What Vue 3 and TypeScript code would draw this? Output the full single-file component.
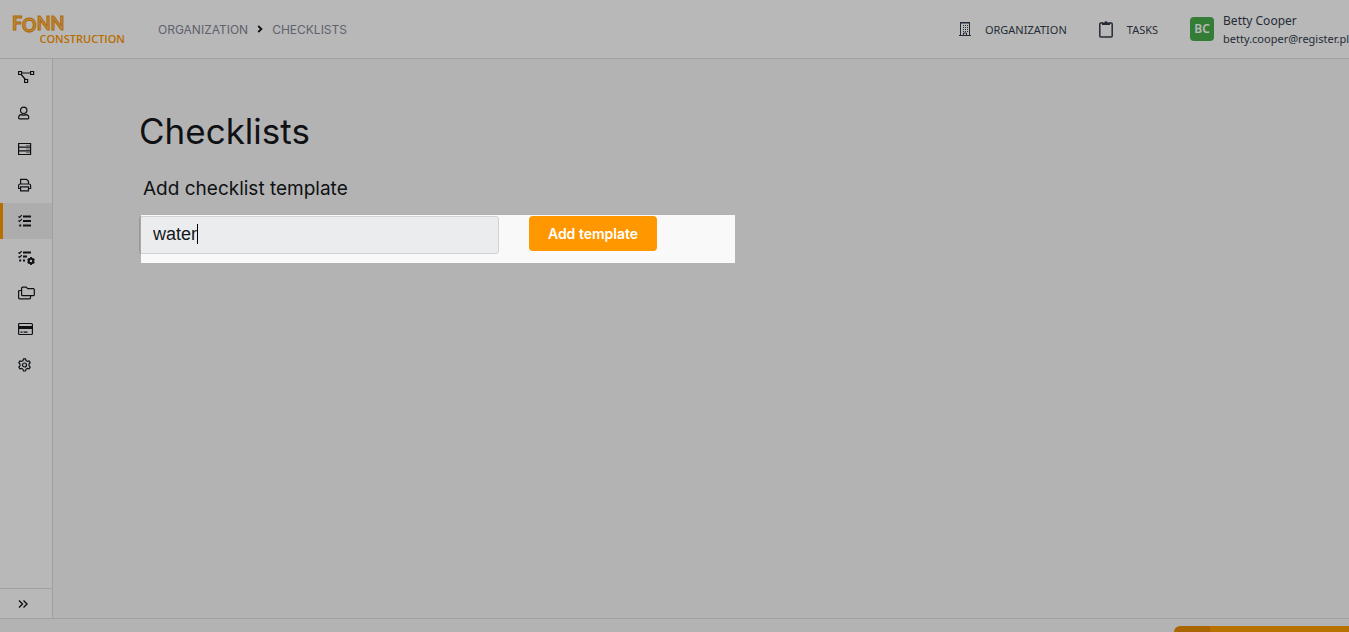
<script setup lang="ts">
import { ref } from 'vue'

interface NavItem {
  name: string
  label: string
}

const navItems: NavItem[] = [
  { name: 'workflow', label: 'Workflow' },
  { name: 'user', label: 'Users' },
  { name: 'server', label: 'Storage' },
  { name: 'printer', label: 'Print' },
  { name: 'checklist', label: 'Checklists' },
  { name: 'checklist-settings', label: 'Checklist settings' },
  { name: 'folders', label: 'Folders' },
  { name: 'card', label: 'Billing' },
  { name: 'settings', label: 'Settings' },
]

const active = ref('checklist')
const templateName = ref('water')
</script>

<template>
  <div class="page">
    <header class="header">
      <a class="logo" href="#" aria-label="Fonn Construction">
        <svg class="logo-mark" viewBox="0 0 54 22" aria-hidden="true">
          <text class="logo-letters" x="0" y="17">F<tspan dy="2">O</tspan><tspan dy="-2">NN</tspan></text>
        </svg>
        <span class="logo-sub">CONSTRUCTION</span>
      </a>
      <nav class="crumbs" aria-label="Breadcrumb">
        <a href="#">ORGANIZATION</a>
        <svg viewBox="0 0 6 8" aria-hidden="true"><path d="M1.2 1 4.4 4 1.2 7" /></svg>
        <a href="#">CHECKLISTS</a>
      </nav>
      <div class="actions">
        <a class="action" href="#">
          <svg class="building" viewBox="0 0 12 14" aria-hidden="true">
            <path d="M1.500 13V1h9v12M0 13.500h12M1 .5h10" />
            <path class="windows" d="M4.500 3v7M6.500 3v7M8.500 3v7" />
            <path d="M4.500 13v-2h3v2" />
          </svg>
          <span>ORGANIZATION</span>
        </a>
        <a class="action tasks" href="#">
          <svg class="clipboard" viewBox="0 0 14 18" aria-hidden="true">
            <path d="M4 3H1.800a1 1 0 0 0-1 1v12a1 1 0 0 0 1 1h10.400a1 1 0 0 0 1-1V4a1 1 0 0 0-1-1H10" />
            <path class="solid" d="M3 5V2.500h2.300a1.800 1.800 0 0 1 3.400 0H11V5Z" />
          </svg>
          <span>TASKS</span>
        </a>
        <a class="account" href="#">
          <span class="avatar">BC</span>
          <span class="who">
            <span class="name">Betty Cooper</span>
            <span class="mail">betty.cooper@register.pl</span>
          </span>
        </a>
      </div>
    </header>

    <div class="body">
      <aside class="sidebar">
        <nav class="nav" aria-label="Main">
          <a
            v-for="item in navItems"
            :key="item.name"
            href="#"
            class="nav-item"
            :class="{ active: item.name === active }"
            :aria-label="item.label"
            @click.prevent="active = item.name"
          >
            <svg viewBox="0 0 18 16" aria-hidden="true">
              <g v-if="item.name === 'workflow'">
                <path d="M.6 2.500h3v3h-3zM12.600 2.500h3v3h-3zM6.600 10.500h3v3h-3zM3.600 4h9M3.200 5.500 7.400 10.500" />
              </g>
              <g v-else-if="item.name === 'user'">
                <circle cx="5.700" cy="5.300" r="3.200" />
                <path d="M.6 12.800c0-2 1.300-3.200 2.900-3.200 1.200.6 3.200.6 4.400 0 1.600 0 2.900 1.200 2.900 3.200 0 .7-.3 1-.9 1H1.500c-.6 0-.9-.3-.9-1Z" />
              </g>
              <g v-else-if="item.name === 'server'">
                <path d="M.6 2.500h12v11H.6zM.6 6.200h12M.6 9.800h12" />
                <path class="thin" d="M8.500 4.400h1M10.500 4.400h1M8.500 8h1M10.500 8h1M8.500 11.700h1M10.500 11.700h1" />
              </g>
              <g v-else-if="item.name === 'printer'">
                <path d="M2.600 7V2.300h5.900l2 2V7M2.600 11.500h-2V8.600C.6 7.700 1.200 7 2.100 7h8.900c.9 0 1.600.7 1.600 1.600v2.900h-2.100M2.600 9.800h7.900v4H2.600z" />
              </g>
              <g v-else-if="item.name === 'checklist'">
                <path d="M.5 3.500 1.500 4.500 3.800 2.200M.5 7.500 1.500 8.500 3.800 6.200" />
                <path class="bold" d="M5 3.500h8M5 8h8M5 12.500h8M1.200 12.500h2" />
              </g>
              <g v-else-if="item.name === 'checklist-settings'">
                <path d="M.5 3.500 1.500 4.500 3.800 2.200M.5 7.500 1.500 8.500 3.800 6.200" />
                <path class="bold" d="M5 3.500h8M5 7.500h4M1.200 11.500h2M5 11.500h2" />
                <circle class="bold" cx="13" cy="12" r="2.200" />
                <path class="teeth" d="M13 8.100v1.500M13 14.400v1.500M9.600 10.100l1.400.8M15 13.100l1.400.8M9.600 13.900l1.400-.8M15 10.900l1.400-.8" />
              </g>
              <g v-else-if="item.name === 'folders'">
                <path d="M4.600 2.200h3.600l1.500 1.500h5.600c.6 0 1 .4 1 1v5c0 .6-.4 1-1 1H4.600c-.6 0-1-.4-1-1V3.200c0-.6.4-1 1-1Z" />
                <path d="M3.500 5.500H1.600c-.6 0-1 .4-1 1v6.300c0 .6.400 1 1 1h9.900c.6 0 1-.4 1-1v-2" />
              </g>
              <g v-else-if="item.name === 'card'">
                <rect x=".6" y="2.500" width="13.800" height="11" rx="1" />
                <path class="stripe" d="M.6 6.500h13.800" />
                <path d="M2.500 11.200h2M5.500 11.200h4" />
              </g>
              <g v-else>
                <path d="M5.500 1.900h2l.5 1.700 1.400.8 1.700-.5 1.100 1.800-1.200 1.300v1.800l1.200 1.300-1.100 1.800-1.700-.4-1.400.8-.5 1.700h-2L5 12.300l-1.400-.8-1.700.4-1.100-1.800L2 8.800V7L.8 5.700l1.100-1.800 1.700.5L5 3.600Z" />
                <circle cx="6.500" cy="8" r="2" />
              </g>
            </svg>
          </a>
        </nav>
        <button class="expand" type="button" aria-label="Expand menu">
          <svg viewBox="0 0 10 8" aria-hidden="true"><path d="M1 .5 4.500 4 1 7.500M5.500.5 9 4 5.500 7.500" /></svg>
        </button>
      </aside>

      <main class="content">
        <h1>Checklists</h1>
        <form @submit.prevent>
          <label for="template-name">Add checklist template</label>
          <div class="form-row">
            <div class="field">
              <input id="template-name" v-model="templateName" type="text" autocomplete="off" />
              <span class="caret" aria-hidden="true"><span>{{ templateName }}</span></span>
            </div>
            <button class="add" type="submit">Add template</button>
            <div class="spotlight"></div>
          </div>
        </form>
      </main>
    </div>

    <footer class="footer">
      <div class="chat"></div>
    </footer>
  </div>
</template>

<style>
body {
  margin: 0;
}
</style>

<style scoped>
* {
  box-sizing: border-box;
}
.page {
  display: flex;
  flex-direction: column;
  height: 100vh;
  overflow: hidden;
  background: #f9f9f9;
  color: #15181c;
  font-family: Inter, "Open Sans", sans-serif;
}
a {
  color: inherit;
  text-decoration: none;
}
svg {
  display: block;
  fill: none;
  stroke: currentColor;
}
.header {
  display: flex;
  flex: none;
  align-items: center;
  height: 59px;
  padding-left: 12px;
  background: #fff;
  border-bottom: 1px solid #dedede;
}
.logo {
  display: flex;
  flex-direction: column;
  width: 113px;
  color: #ff9800;
}
.logo-mark {
  width: 54px;
  height: 22px;
  overflow: visible;
}
.logo-letters {
  font: 700 18px Lato, "Open Sans", sans-serif;
  fill: #ffc36b;
  stroke: #f59200;
  stroke-width: 1;
}
.logo-sub {
  align-self: flex-end;
  margin-top: -3px;
  font: 600 11px/14px "Open Sans", sans-serif;
}
.crumbs {
  display: flex;
  align-items: center;
  gap: 9px;
  margin-left: 33px;
  color: #858898;
  font-size: 12px;
}
.crumbs svg {
  width: 6px;
  height: 8px;
  color: #15181c;
  stroke-width: 1.8;
}
.actions {
  display: flex;
  align-items: center;
  margin-left: auto;
  color: #343c4c;
  font-family: "Noto Sans", sans-serif;
  font-size: 11px;
}
.action {
  display: flex;
  align-items: center;
  gap: 14px;
}
.tasks {
  margin-left: 32px;
}
.building {
  width: 12px;
  height: 14px;
}
.windows {
  stroke-dasharray: 1 1;
}
.clipboard {
  width: 14px;
  height: 18px;
  stroke-width: 1.5;
}
.solid {
  fill: currentColor;
  stroke: none;
}
.account {
  display: flex;
  align-items: center;
  gap: 9px;
  margin-left: 32px;
}
.avatar {
  width: 24px;
  height: 24px;
  border-radius: 4px;
  background: #47ae4d;
  color: #fff;
  font-size: 12px;
  font-weight: 600;
  line-height: 24px;
  text-align: center;
}
.who {
  display: flex;
  flex-direction: column;
  padding-top: 1px;
  line-height: 18px;
}
.name {
  font-size: 12px;
}
.body {
  display: flex;
  flex: 1;
  min-height: 0;
}
.sidebar {
  display: flex;
  flex: none;
  flex-direction: column;
  justify-content: space-between;
  width: 53px;
  background: #fff;
  border-right: 1px solid #dedede;
}
.nav-item {
  display: flex;
  align-items: center;
  height: 36px;
  padding-left: 15px;
  border-left: 3px solid transparent;
}
.nav-item.active {
  background: #f0f0f0;
  border-left-color: #ff9800;
}
.nav-item svg {
  width: 18px;
  height: 16px;
  stroke-width: 1.2;
}
.nav-item .thin {
  stroke-width: 1;
}
.nav-item .bold {
  stroke-width: 2;
}
.nav-item .teeth {
  stroke-width: 1.8;
}
.nav-item .stripe {
  stroke-width: 3;
}
.expand {
  display: flex;
  align-items: center;
  height: 30px;
  padding: 0 0 0 18px;
  border: 0;
  border-top: 1px solid #dedede;
  background: none;
  color: #15181c;
}
.expand svg {
  width: 10px;
  height: 8px;
  stroke-width: 1.4;
}
.content {
  flex: 1;
  padding: 48px 86px;
}
h1 {
  margin: 0;
  font-size: 35px;
  font-weight: 400;
  line-height: 48px;
}
label {
  display: block;
  margin: 24px 0 0 4px;
  font-size: 19px;
  line-height: 20px;
}
.form-row {
  position: relative;
  display: flex;
  gap: 30px;
  align-items: flex-start;
  width: 596px;
  max-width: 100%;
  margin-top: 16px;
  padding: 1px 0 9px;
}
.field {
  position: relative;
  flex: none;
  width: 360px;
}
input {
  display: block;
  width: 100%;
  height: 38px;
  padding: 0 13px 2px;
  border: 1px solid #d2d2d2;
  border-radius: 3px;
  outline: 0;
  background: #ebecee;
  color: #15181c;
  caret-color: transparent;
  font: 18px/34px "Liberation Sans", Arial, sans-serif;
}
.caret {
  position: absolute;
  top: 8px;
  left: 14px;
  border-right: 1px solid #000;
  font: 18px/20px "Liberation Sans", Arial, sans-serif;
  pointer-events: none;
}
.caret span {
  visibility: hidden;
}
.add {
  height: 35px;
  padding: 0;
  width: 128px;
  border: 0;
  border-radius: 4px;
  background: #ff9800;
  color: #fff;
  font: 600 14px/20px Inter, sans-serif;
}
.spotlight {
  position: absolute;
  inset: 0 0 0 2px;
  z-index: 10;
  box-shadow: 0 0 0 200vmax rgba(0, 0, 0, 0.28);
  pointer-events: none;
}
.footer {
  display: flex;
  flex: none;
  justify-content: flex-end;
  height: 14px;
  padding-top: 7px;
  border-top: 1px solid #dedede;
}
.chat {
  width: 175px;
  border-top-left-radius: 6px;
  background: linear-gradient(to right, #eb8d00 36px, #ff9f00 36px);
}
</style>
